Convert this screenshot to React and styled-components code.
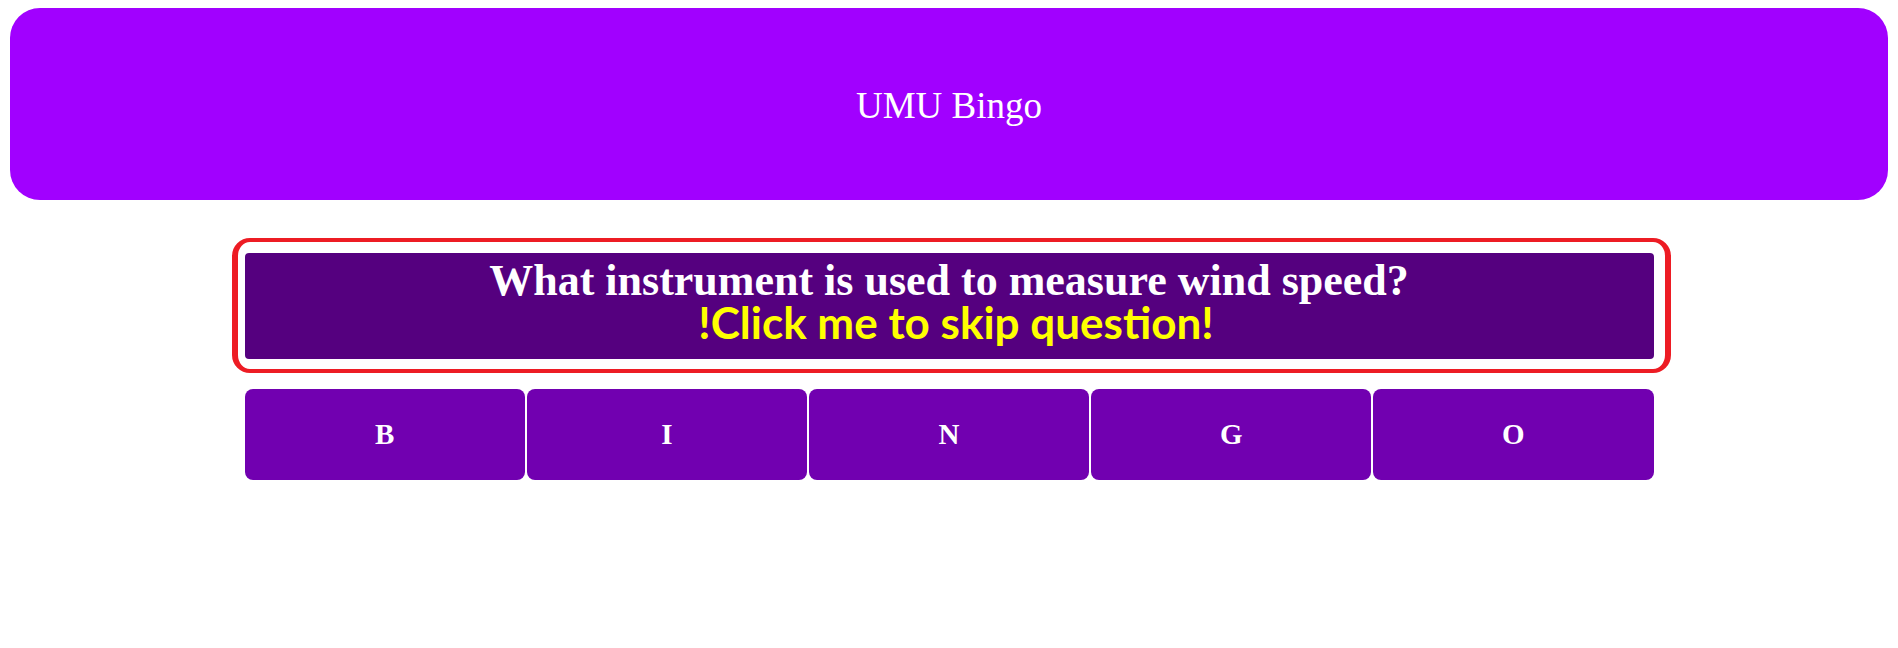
import React from "react";
import styled, { createGlobalStyle } from "styled-components";

const letters = ["B", "I", "N", "G", "O"];

const GlobalStyle = createGlobalStyle`
  body {
    margin: 0;
    background: #ffffff;
    font-family: "Liberation Serif", "Times New Roman", serif;
  }
`;

export default function App() {
  return (
    <Page>
      <GlobalStyle />
      <Header>
        <Title>UMU Bingo</Title>
      </Header>
      <Column>
        <QuestionFrame>
          <QuestionButton type="button">
            <QuestionText>What instrument is used to measure wind speed?</QuestionText>
            <SkipText>!Click me to skip question!</SkipText>
          </QuestionButton>
        </QuestionFrame>
        <LetterRow>
          {letters.map((letter) => (
            <LetterButton key={letter} type="button">
              {letter}
            </LetterButton>
          ))}
        </LetterRow>
      </Column>
    </Page>
  );
}

const Page = styled.div`
  padding: 8px 10px;
`;

const Header = styled.header`
  height: 192px;
  border-radius: 30px;
  background: #a100ff;
  display: flex;
  align-items: center;
  justify-content: center;
`;

const Title = styled.h1`
  margin: 0;
  padding-top: 2px;
  font-family: "Liberation Serif", "Times New Roman", serif;
  font-weight: 400;
  font-size: 37px;
  color: #ffffff;
`;

const Column = styled.main`
  width: 1409px;
  margin: 38px auto 0;
`;

const QuestionFrame = styled.div`
  margin: 0 -17px 0 -13px;
  padding: 11px 11px 10px 7px;
  border-style: solid;
  border-color: #ed1c24;
  border-width: 4px 6px;
  border-radius: 18px;
`;

const QuestionButton = styled.button`
  display: flex;
  flex-direction: column;
  align-items: center;
  width: 100%;
  height: 106px;
  padding: 6px 0 0;
  border: none;
  border-radius: 4px;
  background: #55007f;
  cursor: pointer;
`;

const QuestionText = styled.span`
  font-family: "Liberation Serif", "Times New Roman", serif;
  font-weight: 700;
  font-size: 44px;
  line-height: 44px;
  color: #ffffff;
`;

const SkipText = styled.span`
  padding-left: 14px;
  font-family: Lato, "Open Sans", sans-serif;
  font-weight: 700;
  font-size: 44px;
  line-height: 38px;
  color: #ffff00;
`;

const LetterRow = styled.div`
  display: grid;
  grid-template-columns: repeat(5, 1fr);
  gap: 2px;
  margin-top: 16px;
`;

const LetterButton = styled.button`
  height: 91px;
  border: none;
  border-radius: 8px;
  background: #7100b0;
  color: #ffffff;
  font-family: "Liberation Serif", "Times New Roman", serif;
  font-weight: 700;
  font-size: 29px;
  cursor: pointer;
`;
